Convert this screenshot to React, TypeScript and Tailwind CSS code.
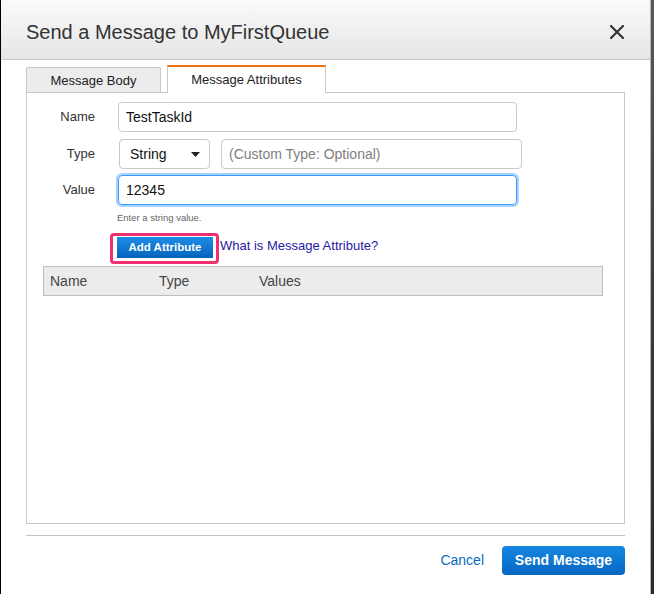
import { useState } from "react";

const font = { fontFamily: '"Liberation Sans", Arial, Helvetica, sans-serif' };

export default function App() {
  const [name, setName] = useState("TestTaskId");
  const [value, setValue] = useState("12345");

  return (
    <div className="flex w-[654px] h-[594px] bg-white text-[#333]" style={font}>
      {/* dialog */}
      <div className="flex flex-col flex-1 border-l border-black border-r border-r-[#b5b5b5]">
        {/* Header */}
        <div className="flex items-center justify-between h-[60px] pt-[4px] pl-[25px] pr-[26px] border-b border-[#c9c9c9] bg-gradient-to-b from-[#fafafa] to-[#e6e6e6]">
          <h2 className="text-[20px] text-[#333] leading-none">Send a Message to MyFirstQueue</h2>
          <svg width="14" height="14" viewBox="0 0 14 14">
            <path d="M1 1L13 13M13 1L1 13" stroke="#333" strokeWidth="2.2" strokeLinecap="round" />
          </svg>
        </div>

        <div className="flex flex-col pl-[25px] pr-[25px]">
          {/* Tabs */}
          <div className="flex items-end gap-[6px] h-[32px]">
            <div className="flex items-center justify-center w-[135px] h-[26px] bg-[#ececec] border border-[#c8c8c8] border-b-0 rounded-t-[2px] text-[13px] text-[#222] -mb-px">
              Message Body
            </div>
            <div className="flex items-center justify-center w-[159px] h-[28px] bg-white border border-[#c8c8c8] border-t-2 border-t-[#ec7211] border-b-0 text-[13px] text-[#222] -mb-px relative">
              Message Attributes
            </div>
          </div>

          {/* Panel */}
          <div className="h-[432px] border border-[#c8c8c8] pt-[9px]">
            <div className="grid grid-cols-[68px_1fr] gap-x-[23px] gap-y-[6px] items-center text-[13px]">
              <span className="text-right text-[#333]">Name</span>
              <input
                value={name}
                onChange={(e) => setName(e.target.value)}
                className="w-[399px] h-[30px] px-[7px] border border-[#c9c9c9] rounded-[4px] text-[14px] text-[#111] outline-none"
                style={font}
              />

              <span className="text-right text-[#333] mt-[1px]">Type</span>
              <div className="flex gap-[11px] mt-[1px]">
                <div className="flex items-center justify-between w-[91px] h-[30px] pl-[10px] pr-[9px] border border-[#c9c9c9] rounded-[4px] text-[14px] text-[#111] ml-px">
                  <span>String</span>
                  <svg width="9" height="5" viewBox="0 0 9 5">
                    <path d="M0 0H9L4.5 5Z" fill="#222" />
                  </svg>
                </div>
                <div className="flex items-center w-[301px] h-[30px] px-[7px] border border-[#c9c9c9] rounded-[4px] text-[14px] text-[#808080]">
                  (Custom Type: Optional)
                </div>
              </div>

              <span className="text-right text-[#333]">Value</span>
              <input
                value={value}
                onChange={(e) => setValue(e.target.value)}
                className="w-[399px] h-[30px] px-[7px] border border-[#3b99fc] rounded-[4px] text-[14px] text-[#111] outline-none shadow-[0_0_0_2px_rgba(59,153,252,0.45)]"
                style={font}
              />

              <span />
              <span className="text-[9.5px] text-[#666] -ml-px">Enter a string value.</span>
            </div>

            <div className="flex items-center mt-[8px] ml-[83px]">
              <div className="border-[3px] border-[#f03070] rounded-[4px] bg-white pl-[4px] pr-[3px] pt-[1px] pb-[3px]">
                <button
                  className="flex items-center justify-center w-[96px] h-[21px] bg-gradient-to-b from-[#1e8de6] to-[#0564bd] text-white text-[11.5px] font-bold"
                  style={font}
                >
                  Add Attribute
                </button>
              </div>
              <a href="#" className="text-[13px] text-[#1f1aa6] -mt-[6px] ml-px">
                What is Message Attribute?
              </a>
            </div>

            <div className="flex items-center h-[30px] ml-[16px] mr-[21px] mt-[2px] bg-[#ececec] border border-[#bdbdbd] text-[14px] text-[#444]">
              <span className="w-[115px] pl-[6px]">Name</span>
              <span className="w-[100px]">Type</span>
              <span>Values</span>
            </div>
          </div>

          {/* Footer */}
          <div className="h-px bg-[#c3c3c3] mt-[11px]" />
          <div className="flex items-center justify-end gap-[18px] mt-[10px]">
            <a href="#" className="text-[14px] text-[#0a6cbf]">Cancel</a>
            <button
              className="h-[29px] w-[123px] rounded-[4px] bg-gradient-to-b from-[#1787e0] to-[#0467c2] text-white text-[14px] font-bold"
              style={font}
            >
              Send Message
            </button>
          </div>
        </div>
      </div>
      <div className="w-[3px] bg-gradient-to-b from-[#5a5a5a] via-[#3c3c3c] to-[#2a2a2a]" />
    </div>
  );
}
